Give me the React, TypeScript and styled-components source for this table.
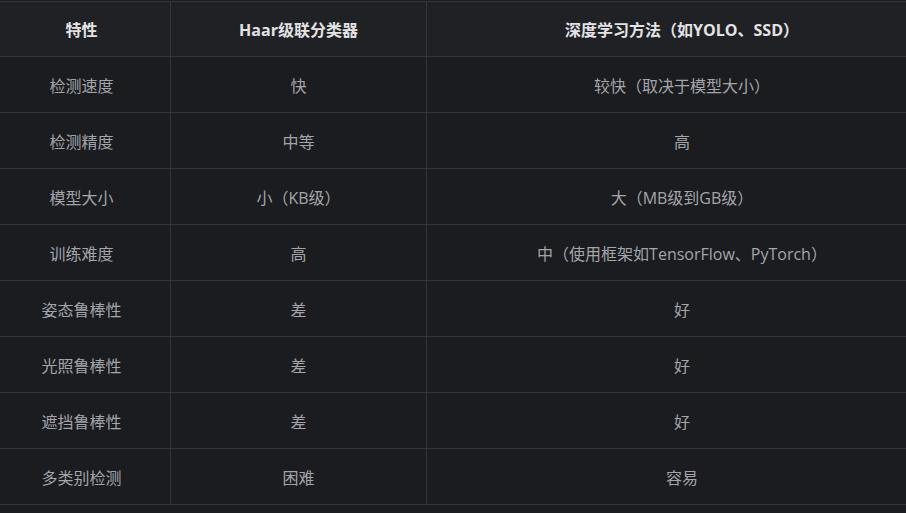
import React from "react";
import styled, { createGlobalStyle } from "styled-components";

const Global = createGlobalStyle`
  html, body {
    margin: 0;
    padding: 0;
    background: #1b1c1f;
    overflow: hidden;
  }
  body {
    font-family: "Open Sans", "Noto Sans CJK SC", sans-serif;
  }
`;

const Page = styled.div`
  width: 906px;
  height: 513px;
  padding-top: 1px;
  box-sizing: border-box;
  background: #1b1c1f;
  overflow: hidden;
`;

const Table = styled.table`
  margin-left: -7px;
  width: 945px;
  border-collapse: collapse;
  table-layout: fixed;
  font-size: 16px;
`;

const HeadCell = styled.th<{ $w?: number; $first?: boolean }>`
  width: ${(p) => (p.$w ? `${p.$w}px` : "auto")};
  height: 54px;
  padding: 0;
  background: #202124;
  color: #e3e3e6;
  font-weight: 700;
  text-align: center;
  vertical-align: middle;
  border: 1px solid #34353a;
  border-left: ${(p) => (p.$first ? "none" : "1px solid #34353a")};
`;

const Row = styled.tr`
  background: #1b1c1f;
`;

const Cell = styled.td<{ $first?: boolean }>`
  height: 55px;
  padding: 0;
  color: #a4a5ab;
  text-align: center;
  vertical-align: middle;
  border: 1px solid #34353a;
  border-left: ${(p) => (p.$first ? "none" : "1px solid #34353a")};
`;

const rows: [string, string, string][] = [
  ["检测速度", "快", "较快（取决于模型大小）"],
  ["检测精度", "中等", "高"],
  ["模型大小", "小（KB级）", "大（MB级到GB级）"],
  ["训练难度", "高", "中（使用框架如TensorFlow、PyTorch）"],
  ["姿态鲁棒性", "差", "好"],
  ["光照鲁棒性", "差", "好"],
  ["遮挡鲁棒性", "差", "好"],
  ["多类别检测", "困难", "容易"],
];

export default function App() {
  return (
    <>
      <Global />
      <Page>
        <Table>
          <thead>
            <tr>
              <HeadCell $w={177} $first>特性</HeadCell>
              <HeadCell $w={255}>Haar级联分类器</HeadCell>
              <HeadCell>深度学习方法（如YOLO、SSD）</HeadCell>
            </tr>
          </thead>
          <tbody>
            {rows.map((r) => (
              <Row key={r[0]}>
                <Cell $first>{r[0]}</Cell>
                <Cell>{r[1]}</Cell>
                <Cell>{r[2]}</Cell>
              </Row>
            ))}
          </tbody>
        </Table>
      </Page>
    </>
  );
}
